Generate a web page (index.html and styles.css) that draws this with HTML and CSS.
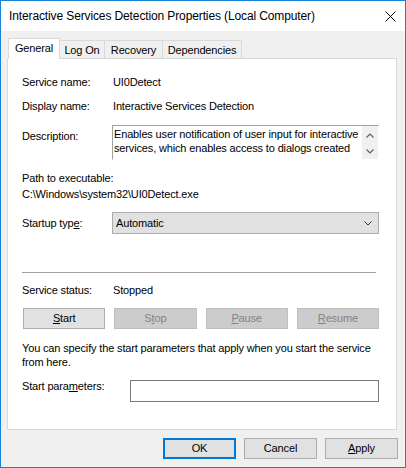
FILE: index.html
```html
<!DOCTYPE html>
<html>
<head>
<meta charset="utf-8">
<title>Interactive Services Detection Properties</title>
<link rel="stylesheet" href="styles.css">
</head>
<body>
<div class="window">
  <div class="titlebar">
    <span class="title">Interactive Services Detection Properties (Local Computer)</span>
    <svg class="close" width="11" height="11" viewBox="0 0 11 11"><path d="M0.5 0.5L10.5 10.5M10.5 0.5L0.5 10.5" stroke="#000" stroke-width="1" fill="none"/></svg>
  </div>
  <div class="body">
    <div class="tabs">
      <div class="tab active t-general">General</div>
      <div class="tab t-logon">Log On</div>
      <div class="tab t-recovery">Recovery</div>
      <div class="tab t-deps">Dependencies</div>
    </div>
    <div class="panel">
      <div class="row r-name"><span class="label">Service name:</span><span class="value">UI0Detect</span></div>
      <div class="row r-display"><span class="label">Display name:</span><span class="value">Interactive Services Detection</span></div>
      <div class="row r-desc">
        <span class="label label-desc">Description:</span>
        <div class="desc-box">
          <div class="desc-text">Enables user notification of user input for interactive<br>services, which enables access to dialogs created</div>
          <div class="scroll">
            <svg width="8" height="5" viewBox="0 0 8 5"><polyline points="0.5,4.5 4,1 7.5,4.5" fill="none" stroke="#606060" stroke-width="1.2"/></svg>
            <svg width="8" height="5" viewBox="0 0 8 5"><polyline points="0.5,0.5 4,4 7.5,0.5" fill="none" stroke="#606060" stroke-width="1.2"/></svg>
          </div>
        </div>
      </div>
      <div class="path-label">Path to executable:</div>
      <div class="path">C:\Windows\system32\UI0Detect.exe</div>
      <div class="row r-startup">
        <span class="label">Startup typ<u>e</u>:</span>
        <div class="select"><span>Automatic</span><svg width="8" height="5" viewBox="0 0 8 5"><polyline points="0.5,0.5 4,4 7.5,0.5" fill="none" stroke="#333" stroke-width="1"/></svg></div>
      </div>
      <div class="sep"></div>
      <div class="row r-status"><span class="label">Service status:</span><span class="value">Stopped</span></div>
      <div class="svc-buttons">
        <div class="btn"><u>S</u>tart</div>
        <div class="btn disabled">S<u>t</u>op</div>
        <div class="btn disabled"><u>P</u>ause</div>
        <div class="btn disabled"><u>R</u>esume</div>
      </div>
      <p class="hint">You can specify the start parameters that apply when you start the service<br>from here.</p>
      <div class="row r-params">
        <span class="label label-params">Start para<u>m</u>eters:</span>
        <div class="input"></div>
      </div>
    </div>
    <div class="footer">
      <div class="btn btn-foot default">OK</div>
      <div class="btn btn-foot">Cancel</div>
      <div class="btn btn-foot"><u>A</u>pply</div>
    </div>
  </div>
</div>
</body>
</html>
```

FILE: styles.css
```css
* { box-sizing: border-box; }
html, body { margin: 0; padding: 0; }
body {
  font-family: "Liberation Sans", Arial, sans-serif;
  font-size: 11px;
  letter-spacing: -0.15px;
  line-height: 15px;
  color: #000;
  background: #fff;
}
u { text-decoration: underline; text-underline-offset: 1px; }

.window {
  width: 406px;
  height: 468px;
  border: 1px solid #1883d7;
  background: #f0f0f0;
  display: flex;
  flex-direction: column;
}
.titlebar {
  height: 30px;
  flex: none;
  background: #fff;
  display: flex;
  align-items: center;
  justify-content: space-between;
  padding: 0 9px 0 8px;
}
.title {
  font-size: 12px;
  letter-spacing: -0.12px;
  line-height: 30px;
  white-space: nowrap;
}
.close { display: block; }

.body {
  flex: 1;
  padding: 7px 8px 0 6px;
  display: flex;
  flex-direction: column;
}
.tabs {
  height: 20px;
  display: flex;
  align-items: flex-end;
  padding-left: 1px;
}
.tab {
  height: 18px;
  border: 1px solid #d9d9d9;
  border-bottom: none;
  background: #f0f0f0;
  text-align: center;
  line-height: 19px;
  white-space: nowrap;
  margin-left: -1px;
}
.tab:first-child { margin-left: 0; }
.tab.active {
  height: 21px;
  margin-bottom: -1px;
  background: #fff;
  position: relative;
  z-index: 1;
  line-height: 18px;
}
.t-general { width: 52px; }
.t-logon { width: 46px; }
.t-recovery { width: 59px; }
.t-deps { width: 80px; }

.panel {
  height: 372px;
  flex: none;
  background: #fff;
  border: 1px solid #d9d9d9;
  padding: 0 17px 0 14px;
  display: flex;
  flex-direction: column;
}
.row { display: flex; align-items: flex-start; }
.label { width: 90px; flex: none; white-space: nowrap; }
.value { white-space: nowrap; padding-left: 1px; }

.r-name { margin-top: 16px; }
.r-display { margin-top: 9px; }
.r-desc { margin-top: 11px; }
.label-desc { padding-top: 4px; }
.desc-box {
  flex: 1;
  height: 35px;
  border: 1px solid #a0a0a0;
  border-right-color: #fff;
  border-bottom-color: #fff;
  display: flex;
  overflow: hidden;
}
.desc-text {
  flex: 1;
  line-height: 14px;
  padding: 1px 0 0 1px;
  white-space: nowrap;
  overflow: hidden;
}
.scroll {
  width: 16px;
  flex: none;
  background: #f0f0f0;
  display: flex;
  flex-direction: column;
  align-items: center;
  justify-content: space-between;
  padding: 7px 0 5px;
}
.scroll svg { display: block; }

.path-label { margin-top: 11px; }
.path { margin-top: 1px; }

.r-startup { margin-top: 10px; align-items: center; }
.select {
  flex: 1;
  height: 22px;
  background: #e1e1e1;
  border: 1px solid #adadad;
  display: flex;
  align-items: center;
  justify-content: space-between;
  padding: 0 6px 0 3px;
}
.select svg { display: block; }

.sep {
  margin-top: 38px;
  height: 1px;
  width: 354px;
  background: #a0a0a0;
}
.r-status { margin-top: 10px; }

.svc-buttons {
  margin-top: 10px;
  margin-left: 1px;
  display: grid;
  grid-template-columns: repeat(4, 1fr);
  column-gap: 9px;
}
.btn {
  height: 21px;
  background: #e1e1e1;
  border: 1px solid #adadad;
  text-align: center;
  line-height: 19px;
  white-space: nowrap;
}
.btn.disabled {
  background: #cccccc;
  border-color: #bfbfbf;
  color: #838383;
}

.hint {
  margin: 12px 0 0;
  line-height: 14px;
  white-space: nowrap;
}
.r-params { margin-top: 10px; }
.label-params { width: 108px; }
.input {
  flex: 1;
  height: 22px;
  margin-top: 1px;
  background: #fff;
  border: 1px solid #7a7a7a;
}

.footer {
  margin-top: 8px;
  margin-right: -1px;
  display: flex;
  justify-content: flex-end;
  column-gap: 8px;
}
.btn-foot { width: 73px; }
.btn.default {
  border: 2px solid #0078d7;
  line-height: 17px;
}
```
